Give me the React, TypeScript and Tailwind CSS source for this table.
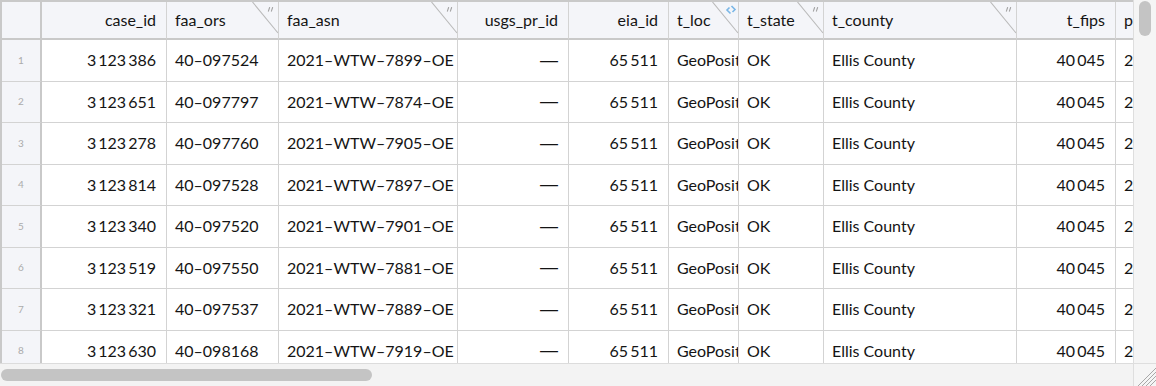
import React from "react";

type Col = { key: string; label: string; w: number; align: "left" | "right"; corner?: "ticks" | "loc" };

const cols: Col[] = [
  { key: "case_id", label: "case_id", w: 125, align: "right" },
  { key: "faa_ors", label: "faa_ors", w: 112, align: "left", corner: "ticks" },
  { key: "faa_asn", label: "faa_asn", w: 179, align: "left", corner: "ticks" },
  { key: "usgs_pr_id", label: "usgs_pr_id", w: 111, align: "right" },
  { key: "eia_id", label: "eia_id", w: 100, align: "right" },
  { key: "t_loc", label: "t_loc", w: 70, align: "left", corner: "loc" },
  { key: "t_state", label: "t_state", w: 85, align: "left", corner: "ticks" },
  { key: "t_county", label: "t_county", w: 193, align: "left", corner: "ticks" },
  { key: "t_fips", label: "t_fips", w: 99, align: "right" },
  { key: "p_name", label: "p_name", w: 120, align: "left" },
];

const T = "\u2009";
const raw: [string, string, string][] = [
  ["386", "097524", "7899"],
  ["651", "097797", "7874"],
  ["278", "097760", "7905"],
  ["814", "097528", "7897"],
  ["340", "097520", "7901"],
  ["519", "097550", "7881"],
  ["321", "097537", "7889"],
  ["630", "098168", "7919"],
];

const rows = raw.map(([a, b, c]) => ({
  case_id: `3${T}123${T}${a}`,
  faa_ors: `40–${b}`,
  faa_asn: `2021–WTW–${c}–OE`,
  usgs_pr_id: "—",
  eia_id: `65${T}511`,
  t_loc: "GeoPosition[{36.4, −97.1}]",
  t_state: "OK",
  t_county: "Ellis County",
  t_fips: `40${T}045`,
  p_name: "2.5-101.6",
})) as Record<string, string>[];

function Corner({ kind }: { kind: "ticks" | "loc" }) {
  return (
    <svg className="absolute top-0 right-0" width="26" height="34" viewBox="0 0 26 34">
      <line x1="0.5" y1="0" x2="26" y2="31" stroke="#b9b9b9" strokeWidth="1.1" />
      {kind === "ticks" ? (
        <g stroke="#a3a3a3" strokeWidth="1.1" strokeLinecap="round">
          <line x1="17.6" y1="5.5" x2="16.4" y2="9.2" />
          <line x1="20.6" y1="5.5" x2="19.4" y2="9.2" />
        </g>
      ) : (
        <g fill="none" stroke="#79b6e6" strokeWidth="1.6">
          <path d="M19.5 4 L23 7.5 L20.5 10" />
          <path d="M18.5 11.5 L15 8 L17.5 5.5" />
        </g>
      )}
    </svg>
  );
}

export default function App() {
  const font = { fontFamily: "Lato, 'Noto Sans', sans-serif" };
  return (
    <div
      className="w-[1156px] h-[386px] bg-white grid grid-cols-[1133px_23px] grid-rows-[363px_23px] overflow-hidden"
      style={font}
    >
      <div className="overflow-hidden border-t-2 border-l-2 border-[#c9c9c9] text-[16px] text-[#141414]">
        <div className="flex w-max">
          <div className="w-[40px] h-[38px] shrink-0 bg-[#f4f5f9] border-r-2 border-b-2 border-[#c9c9c9]" />
          {cols.map((c) => (
            <div
              key={c.key}
              className={`relative shrink-0 h-[38px] bg-[#f4f5f9] border-r border-[#d3d3d3] border-b-2 border-b-[#c9c9c9] flex items-center whitespace-nowrap overflow-hidden ${
                c.align === "right" ? "justify-end pr-[10px]" : "justify-start pl-[8px]"
              }`}
              style={{ width: c.w }}
            >
              {c.label}
              {c.corner && <Corner kind={c.corner} />}
            </div>
          ))}
        </div>
        {rows.map((r, i) => (
          <div key={i} className="flex w-max">
            <div className="w-[40px] h-[41.5px] shrink-0 bg-[#f4f5f9] border-r-2 border-b border-r-[#c9c9c9] border-b-[#d3d3d3] flex items-center justify-center text-[10px] text-[#ababab]">
              {i + 1}
            </div>
            {cols.map((c) => (
              <div
                key={c.key}
                className={`shrink-0 h-[41.5px] border-r border-b border-[#d3d3d3] flex items-center whitespace-nowrap overflow-hidden ${
                  c.align === "right" ? "justify-end pr-[10px]" : "justify-start pl-[8px]"
                }`}
                style={{ width: c.w }}
              >
                {c.key === "usgs_pr_id" ? (
                  <span className="text-[18px]" style={{ fontFamily: "'Liberation Sans', sans-serif" }}>
                    {r[c.key]}
                  </span>
                ) : (
                  r[c.key]
                )}
              </div>
            ))}
          </div>
        ))}
      </div>
      <div className="bg-[#f5f5f5] border-l border-[#dedede] flex flex-col items-center pt-[1px]">
        <div className="w-[12px] h-[35px] rounded-full bg-[#c4c4c4]" />
      </div>
      <div className="bg-[#f3f3f3] border-t border-[#dcdcdc] flex items-center pl-[1px]">
        <div className="w-[371px] h-[12px] rounded-full bg-[#c4c4c4]" />
      </div>
      <div className="bg-[#f5f5f5] border-l border-t border-[#dedede] relative">
        <svg className="absolute right-0 bottom-0" width="20" height="20" viewBox="0 0 20 20">
          <g stroke="#a8a8a8" strokeWidth="1">
            <line x1="2" y1="20" x2="20" y2="2" />
            <line x1="6" y1="20" x2="20" y2="6" />
            <line x1="10" y1="20" x2="20" y2="10" />
            <line x1="14" y1="20" x2="20" y2="14" />
          </g>
        </svg>
      </div>
    </div>
  );
}
